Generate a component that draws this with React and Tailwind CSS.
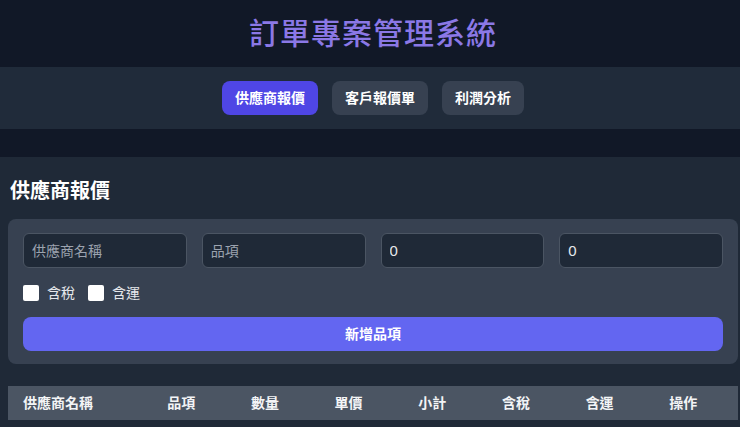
import React from 'react';

const tabs = ['供應商報價', '客戶報價單', '利潤分析'];
const columns = ['供應商名稱', '品項', '數量', '單價', '小計', '含稅', '含運', '操作'];

export default function App() {
  return (
    <div
      className="min-h-[427px] bg-[#1f2937] text-white"
      style={{ fontFamily: '"Liberation Sans", "Noto Sans CJK TC", sans-serif' }}
    >
      {/* Header */}
      <header className="bg-[#111827] pl-2 pr-[2px] h-[67px] flex items-center justify-center">
        <h1 className="text-[30px] leading-9 font-medium tracking-[1px] text-[#8b78e6]">
          訂單專案管理系統
        </h1>
      </header>

      {/* Tabs */}
      <nav className="bg-[#202b3a] pl-2 pr-[2px] py-[14px] flex justify-center gap-[14px]">
        {tabs.map((tab, i) => (
          <button
            key={tab}
            className={`h-[34px] px-[13px] rounded-lg text-sm font-bold text-white ${
              i === 0 ? 'bg-[#4f46e5]' : 'bg-[#374151]'
            }`}
          >
            {tab}
          </button>
        ))}
      </nav>

      <div className="h-7 bg-[#111827]" />

      {/* Main */}
      <main className="pl-2 pr-[2px] pt-5">
        <h2 className="text-xl leading-7 font-bold text-white pl-[2px] mb-[14px]">供應商報價</h2>

        <div className="bg-[#374151] rounded-lg px-[15px] pt-[14px] pb-[13px]">
          <div className="grid grid-cols-4 gap-[15px]">
            <input
              placeholder="供應商名稱"
              className="h-[35px] px-2 rounded-md bg-[#1f2937] border border-[#4b5563] text-sm text-white placeholder:text-[#9ca3af] outline-none"
            />
            <input
              placeholder="品項"
              className="h-[35px] px-2 rounded-md bg-[#1f2937] border border-[#4b5563] text-sm text-white placeholder:text-[#9ca3af] outline-none"
            />
            <input
              defaultValue="0"
              className="h-[35px] px-2 rounded-md bg-[#1f2937] border border-[#4b5563] text-[15px] text-[#e5e7eb] outline-none"
            />
            <input
              defaultValue="0"
              className="h-[35px] px-2 rounded-md bg-[#1f2937] border border-[#4b5563] text-[15px] text-[#e5e7eb] outline-none"
            />
          </div>

          <div className="mt-[17px] flex items-center gap-[13px] h-4">
            {['含稅', '含運'].map((label) => (
              <label key={label} className="flex items-center gap-2 text-sm text-[#e5e7eb]">
                <span className="w-4 h-4 rounded-[2px] bg-white inline-block" />
                {label}
              </label>
            ))}
          </div>

          <button className="mt-4 w-full h-[34px] rounded-lg bg-[#6366f1] text-sm font-bold text-white">
            新增品項
          </button>
        </div>

        <table className="w-full mt-[22px] border-collapse">
          <thead>
            <tr className="bg-[#4b5563]">
              {columns.map((col) => (
                <th
                  key={col}
                  className="h-[34px] px-[15px] text-left text-sm font-bold text-[#f3f4f6]"
                >
                  {col}
                </th>
              ))}
            </tr>
          </thead>
          <tbody />
        </table>
      </main>
    </div>
  );
}
